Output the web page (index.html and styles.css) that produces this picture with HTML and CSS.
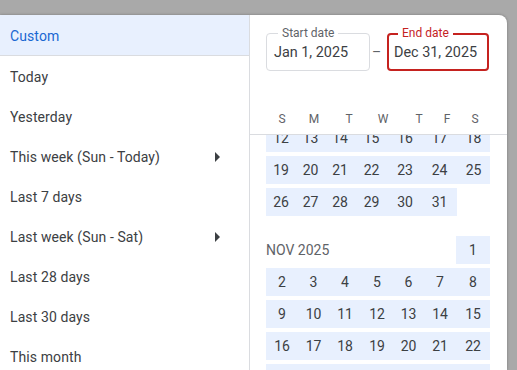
FILE: index.html
```html
<!DOCTYPE html>
<html lang="en">
<head>
    <meta charset="UTF-8">
    <title>Date range</title>
    <link rel="stylesheet" href="styles.css">
</head>
<body>
    <div class="picker">
        <ul class="presets">
            <li class="preset active">Custom</li>
            <li class="preset">Today</li>
            <li class="preset">Yesterday</li>
            <li class="preset">This week (Sun - Today) <svg class="arrow" viewBox="0 0 24 24"><path d="M10 17l5-5-5-5v10z"/></svg></li>
            <li class="preset">Last 7 days</li>
            <li class="preset">Last week (Sun - Sat) <svg class="arrow" viewBox="0 0 24 24"><path d="M10 17l5-5-5-5v10z"/></svg></li>
            <li class="preset">Last 28 days</li>
            <li class="preset">Last 30 days</li>
            <li class="preset">This month</li>
        </ul>

        <div class="calendar">
            <div class="cal-head">
                <div class="range">
                    <div class="field start">
                        <span class="label">Start date</span>
                        <span class="value">Jan 1, 2025</span>
                    </div>
                    <div class="dash">–</div>
                    <div class="field end">
                        <span class="label">End date</span>
                        <span class="value">Dec 31, 2025</span>
                    </div>
                </div>
                <div class="weekdays">
                    <span>S</span><span>M</span><span>T</span><span>W</span><span>T</span><span>F</span><span>S</span>
                </div>
            </div>

            <div class="cal-body">
                <div class="months">
                    <div class="month oct">
                        <div class="week"><span class="day">12</span><span class="day">13</span><span class="day">14</span><span class="day">15</span><span class="day">16</span><span class="day">17</span><span class="day">18</span></div>
                        <div class="week"><span class="day">19</span><span class="day">20</span><span class="day">21</span><span class="day">22</span><span class="day">23</span><span class="day">24</span><span class="day">25</span></div>
                        <div class="week"><span class="day">26</span><span class="day">27</span><span class="day">28</span><span class="day">29</span><span class="day">30</span><span class="day">31</span><span class="blank"></span></div>
                    </div>

                    <div class="month nov">
                        <div class="week"><span class="month-name">NOV 2025</span><span class="day">1</span></div>
                        <div class="week"><span class="day">2</span><span class="day">3</span><span class="day">4</span><span class="day">5</span><span class="day">6</span><span class="day">7</span><span class="day">8</span></div>
                        <div class="week"><span class="day">9</span><span class="day">10</span><span class="day">11</span><span class="day">12</span><span class="day">13</span><span class="day">14</span><span class="day">15</span></div>
                        <div class="week"><span class="day">16</span><span class="day">17</span><span class="day">18</span><span class="day">19</span><span class="day">20</span><span class="day">21</span><span class="day">22</span></div>
                        <div class="week"><span class="day">23</span><span class="day">24</span><span class="day">25</span><span class="day">26</span><span class="day">27</span><span class="day">28</span><span class="day">29</span></div>
                        <div class="week"><span class="day">30</span><span class="blank"></span></div>
                    </div>
                </div>
            </div>
        </div>
    </div>
</body>
</html>
```

FILE: styles.css
```css
body {
    margin: 0;
    background-color: #a9a9a9;
    font-family: Roboto, 'Liberation Sans', Arial, sans-serif;
    color: #3c4043;
    overflow: hidden;
}

.picker {
    margin-top: 15px;
    width: 507px;
    height: 355px;
    display: flex;
    background-color: #fff;
    border-radius: 0 8px 0 0;
    box-shadow: 0 0 3px rgba(0, 0, 0, 0.3);
    overflow: hidden;
}

/* Preset list on the left */
.presets {
    list-style: none;
    margin: 0;
    padding: 0;
    width: 249px;
    flex-shrink: 0;
    border-right: 1px solid #dadce0;
}

.preset {
    box-sizing: border-box;
    height: 40px;
    display: flex;
    align-items: center;
    justify-content: space-between;
    padding: 2px 20px 0 10px;
    font-size: 14px;
    letter-spacing: 0.1px;
}

.preset.active {
    height: 41px;
    background-color: #e8f0fe;
    color: #1967d2;
    border-bottom: 1px solid #dadce0;
}

.arrow {
    width: 24px;
    height: 24px;
    fill: #3c4043;
}

/* Calendar on the right */
.calendar {
    flex: 1;
    display: flex;
    flex-direction: column;
    min-width: 0;
}

.cal-head {
    padding: 18px 17px 3px 16px;
    border-bottom: 1px solid #dadce0;
}

.range {
    display: flex;
    align-items: center;
}

.field {
    position: relative;
    box-sizing: border-box;
    height: 38px;
    display: flex;
    align-items: center;
    border-radius: 4px;
    font-size: 14.4px;
}

.field.start {
    width: 104px;
    padding: 0 7px;
    border: 1px solid #dadce0;
}

.field.end {
    width: 102px;
    padding: 0 5px;
    border: 2px solid #c5221f;
}

.label {
    position: absolute;
    left: 11px;
    top: -8px;
    padding: 0 4px;
    background-color: #fff;
    font-size: 12px;
    line-height: 14px;
    color: #5f6368;
}

.field.end .label {
    left: 9px;
    top: -9px;
    color: #c5221f;
}

.dash {
    width: 13px;
    margin-right: 4px;
    text-align: center;
    font-size: 14px;
    color: #5f6368;
}

.weekdays {
    margin-top: 36px;
    height: 24px;
    display: grid;
    grid-template-columns: 32px 32px 38px 30px 42px 14px 42px;
    justify-items: center;
    align-items: center;
    font-size: 12px;
    color: #5f6368;
}

.cal-body {
    flex: 1;
    overflow: hidden;
    padding: 0 17px 0 16px;
}

.months {
    margin-top: -11px;
}

.week {
    display: grid;
    height: 28px;
    margin-bottom: 4px;
    align-items: stretch;
    font-size: 14px;
}

.oct .week {
    grid-template-columns: 30px 29px 30px 33px 34px 35px 33px;
}

.nov {
    margin-top: 20px;
}

.nov .week {
    grid-template-columns: 32px 31px 32px 32px 31px 32px 34px;
}

.day {
    display: flex;
    align-items: center;
    justify-content: center;
    background-color: #e8f0fe;
}

.month-name {
    grid-column: span 6;
    display: flex;
    align-items: center;
    color: #5f6368;
}
```
